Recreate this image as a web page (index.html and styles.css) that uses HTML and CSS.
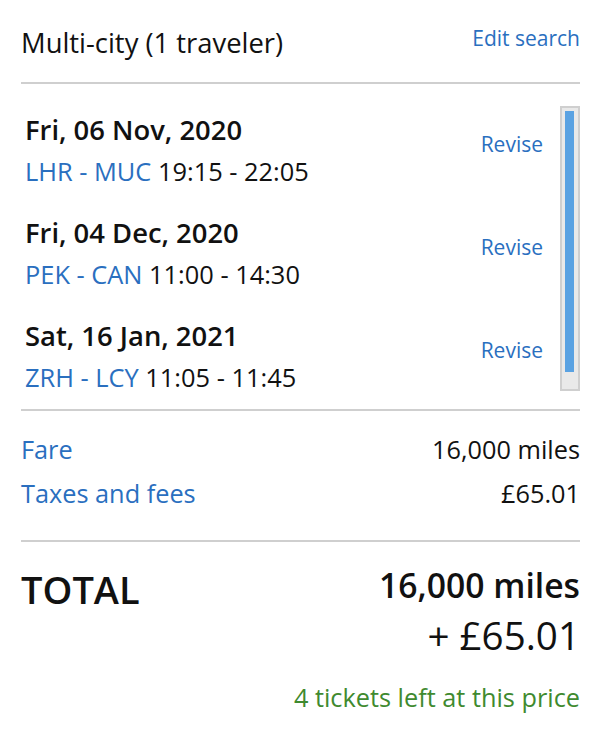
FILE: index.html
```html
<!DOCTYPE html>
<html lang="en">
<head>
    <meta charset="UTF-8">
    <meta name="viewport" content="width=device-width, initial-scale=1.0">
    <title>Trip summary</title>
    <link rel="stylesheet" href="styles.css">
</head>
<body>
    <div class="resumen">
        <div class="cabecera">
            <span class="titulo">Multi-city (1 traveler)</span>
            <a class="enlace editar" href="#">Edit search</a>
        </div>

        <div class="tramos">
            <div class="lista">
                <div class="tramo">
                    <div>
                        <div class="fecha">Fri, 06 Nov, 2020</div>
                        <div class="ruta"><span class="azul">LHR - MUC</span> 19:15 - 22:05</div>
                    </div>
                    <a class="enlace revisar" href="#">Revise</a>
                </div>
                <div class="tramo">
                    <div>
                        <div class="fecha">Fri, 04 Dec, 2020</div>
                        <div class="ruta"><span class="azul">PEK - CAN</span> 11:00 - 14:30</div>
                    </div>
                    <a class="enlace revisar" href="#">Revise</a>
                </div>
                <div class="tramo">
                    <div>
                        <div class="fecha">Sat, 16 Jan, 2021</div>
                        <div class="ruta"><span class="azul">ZRH - LCY</span> 11:05 - 11:45</div>
                    </div>
                    <a class="enlace revisar" href="#">Revise</a>
                </div>
            </div>
            <div class="barra">
                <div class="pulgar"></div>
            </div>
        </div>

        <div class="precios">
            <div class="fila">
                <span class="azul">Fare</span>
                <span>16,000 miles</span>
            </div>
            <div class="fila">
                <span class="azul">Taxes and fees</span>
                <span>£65.01</span>
            </div>
        </div>

        <div class="total">
            <div class="total-etiqueta">TOTAL</div>
            <div class="total-valor">
                <div class="millas">16,000 miles</div>
                <div class="libras">+ £65.01</div>
            </div>
        </div>

        <div class="quedan">4 tickets left at this price</div>
    </div>
</body>
</html>
```

FILE: styles.css
```css
body {
    margin: 0;
    font-family: "Open Sans", Arial, sans-serif;
    color: #111;
    background-color: #fff;
}
.resumen {
    padding: 0 20px 0 21px;
}
.enlace, .azul {
    color: #2a6fbf;
    text-decoration: none;
}
.cabecera {
    display: flex;
    justify-content: space-between;
    align-items: flex-start;
    height: 84px;
    padding-top: 23px;
    box-sizing: border-box;
    border-bottom: 2px solid #cfcfcf;
}
.titulo {
    font-size: 27.4px;
    line-height: 36px;
    margin-top: 2px;
}
.editar {
    font-size: 21px;
    line-height: 30px;
}
.tramos {
    display: flex;
    align-items: flex-start;
    padding: 22px 0 9px 4px;
    border-bottom: 2px solid #cfcfcf;
}
.lista {
    flex: 1;
    padding-top: 6px;
}
.tramo {
    display: flex;
    justify-content: space-between;
    align-items: flex-start;
    height: 103px;
    padding-right: 17px;
}
.tramo:last-child {
    height: 82px;
}
.fecha {
    font-size: 27.4px;
    font-weight: 600;
    line-height: 36px;
}
.ruta {
    font-size: 25.4px;
    line-height: 46px;
}
.revisar {
    font-size: 21px;
    line-height: 30px;
    margin-top: 17px;
}
.barra {
    width: 9px;
    height: 278px;
    border: 2px solid #cfcfcf;
    background-color: #e9e9e9;
    padding: 3px 4px 0 3px;
}
.pulgar {
    height: 261px;
    background-color: #5aa2e2;
}
.precios {
    padding: 16px 0 25px;
    border-bottom: 2px solid #cfcfcf;
}
.fila {
    display: flex;
    justify-content: space-between;
    font-size: 25.3px;
    line-height: 44px;
}
.total {
    display: flex;
    justify-content: space-between;
    align-items: flex-start;
    padding-top: 20px;
}
.total-etiqueta {
    font-size: 38px;
    font-weight: 600;
    line-height: 54px;
}
.total-valor {
    text-align: right;
}
.millas {
    font-size: 33.7px;
    font-weight: 600;
    line-height: 46px;
}
.libras {
    font-size: 38.6px;
    line-height: 54px;
}
.quedan {
    text-align: right;
    color: #3f8a2f;
    font-size: 25.3px;
    line-height: 34px;
    margin-top: 18px;
}
```
